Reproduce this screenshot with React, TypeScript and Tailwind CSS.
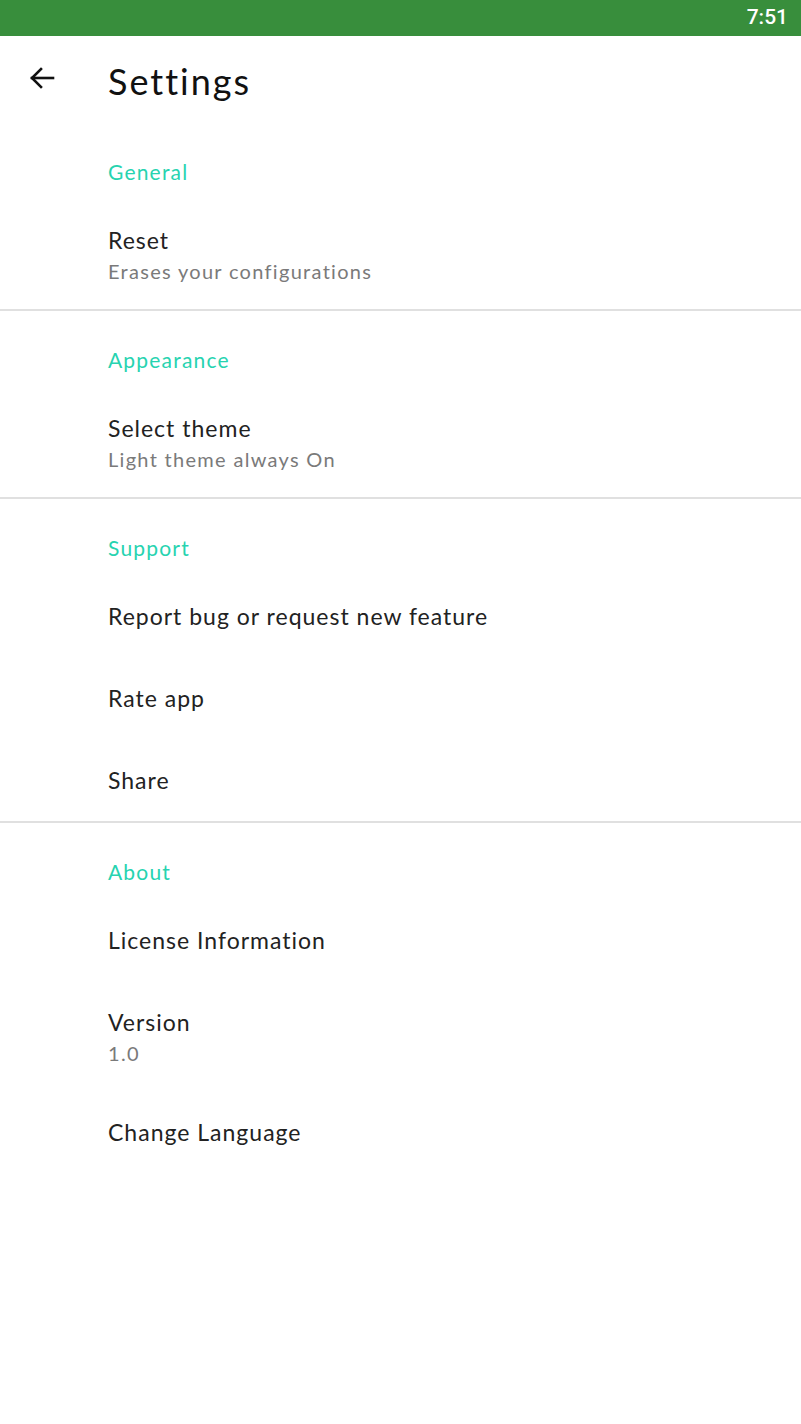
import React from "react";

const font = { fontFamily: '"Lato", "Noto Sans", sans-serif' };

function Header({ text, first }: { text: string; first?: boolean }) {
  return (
    <div className={`${first ? "pt-[34px]" : "pt-[37px]"} pb-[15px] pl-[108px]`}>
      <div className="text-[21px] leading-[24px] tracking-[1.2px] text-[#27d3b0]">{text}</div>
    </div>
  );
}

function Item({ title, subtitle }: { title: string; subtitle?: string }) {
  if (subtitle) {
    return (
      <div className="pt-[27px] pb-[26px] pl-[108px]">
        <div className="text-[23px] leading-[28px] tracking-[1px] text-[#222222]">{title}</div>
        <div className="mt-[5px] text-[20px] leading-[24px] tracking-[1.3px] text-[#7a7a7a]">{subtitle}</div>
      </div>
    );
  }
  return (
    <div className="h-[82px] flex items-center pl-[108px]">
      <div className="text-[23px] leading-[28px] tracking-[1px] text-[#222222]">{title}</div>
    </div>
  );
}

function Divider() {
  return <div className="h-[2px] bg-[#e0e0e0]" />;
}

export default function App() {
  return (
    <div className="w-[801px] h-[1424px] bg-white" style={font}>
      <div className="h-[36px] bg-[#388e3c] flex items-center justify-end pr-[13px]">
        <span className="text-white text-[21px] font-medium" style={{ fontFamily: '"Roboto", sans-serif' }}>7:51</span>
      </div>
      <div className="h-[90px] flex items-center">
        <div className="w-[108px] flex items-center pl-[29px] -mt-[6px]">
          <svg width="26" height="24" viewBox="0 0 26 24" fill="none" stroke="#111" strokeWidth="2.6" strokeLinecap="square">
            <path d="M3 12H24" />
            <path d="M12 3L3 12L12 21" strokeLinejoin="miter" />
          </svg>
        </div>
        <div className="text-[36px] leading-[40px] tracking-[2px] text-[#111111]">Settings</div>
      </div>
      <Header text="General" first />
      <Item title="Reset" subtitle="Erases your configurations" />
      <Divider />
      <Header text="Appearance" />
      <Item title="Select theme" subtitle="Light theme always On" />
      <Divider />
      <Header text="Support" />
      <Item title="Report bug or request new feature" />
      <Item title="Rate app" />
      <Item title="Share" />
      <Divider />
      <Header text="About" />
      <Item title="License Information" />
      <Item title="Version" subtitle="1.0" />
      <Item title="Change Language" />
    </div>
  );
}
